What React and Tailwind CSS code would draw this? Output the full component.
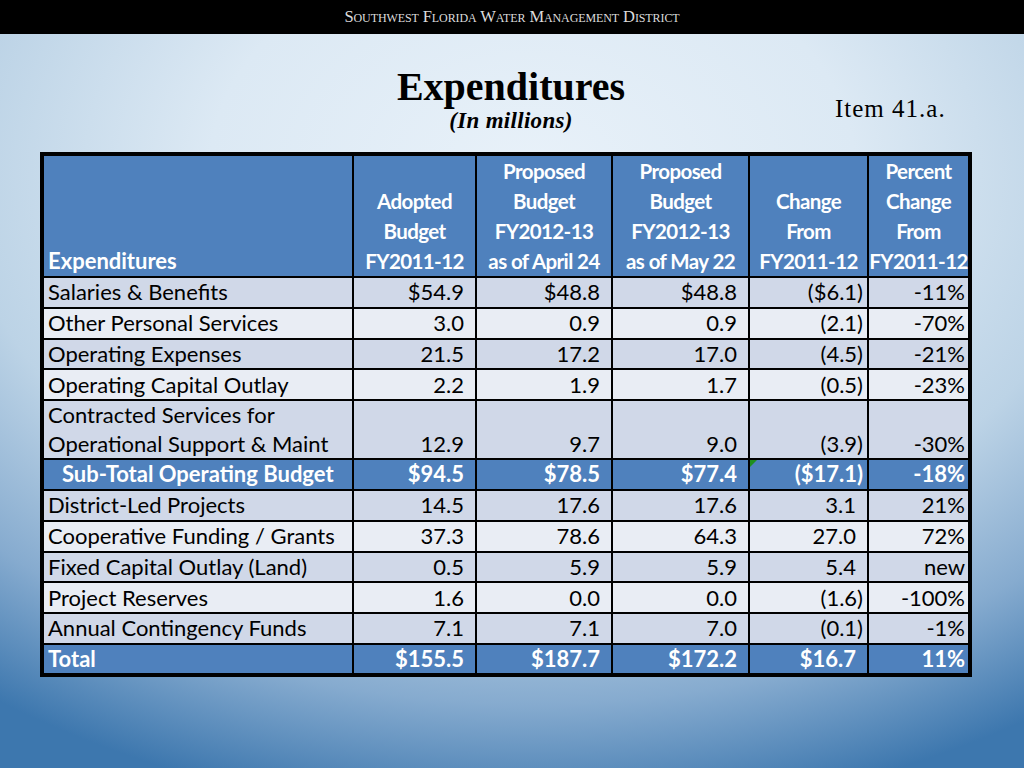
import React from "react";

const rows = [
  { label: "Salaries & Benefits", v: ["$54.9", "$48.8", "$48.8", "($6.1)", "-11%"], tone: "dark" },
  { label: "Other Personal Services", v: ["3.0", "0.9", "0.9", "(2.1)", "-70%"], tone: "light" },
  { label: "Operating Expenses", v: ["21.5", "17.2", "17.0", "(4.5)", "-21%"], tone: "dark" },
  { label: "Operating Capital Outlay", v: ["2.2", "1.9", "1.7", "(0.5)", "-23%"], tone: "light" },
  { label: ["Contracted Services for", "Operational Support & Maint"], v: ["12.9", "9.7", "9.0", "(3.9)", "-30%"], tone: "dark" },
  { label: "Sub-Total Operating Budget", v: ["$94.5", "$78.5", "$77.4", "($17.1)", "-18%"], tone: "sub" },
  { label: "District-Led Projects", v: ["14.5", "17.6", "17.6", "3.1", "21%"], tone: "dark" },
  { label: "Cooperative Funding / Grants", v: ["37.3", "78.6", "64.3", "27.0", "72%"], tone: "light" },
  { label: "Fixed Capital Outlay (Land)", v: ["0.5", "5.9", "5.9", "5.4", "new"], tone: "dark" },
  { label: "Project Reserves", v: ["1.6", "0.0", "0.0", "(1.6)", "-100%"], tone: "light" },
  { label: "Annual Contingency Funds", v: ["7.1", "7.1", "7.0", "(0.1)", "-1%"], tone: "dark" },
  { label: "Total", v: ["$155.5", "$187.7", "$172.2", "$16.7", "11%"], tone: "total" },
];

const headers = [
  ["Adopted", "Budget", "FY2011-12"],
  ["Proposed", "Budget", "FY2012-13", "as of April 24"],
  ["Proposed", "Budget", "FY2012-13", "as of May 22"],
  ["Change", "From", "FY2011-12"],
  ["Percent", "Change", "From", "FY2011-12"],
];

const toneClass = {
  dark: "bg-[#d0d8e8] text-black",
  light: "bg-[#e9edf4] text-black",
  sub: "bg-[#4f81bd] text-white font-bold",
  total: "bg-[#4f81bd] text-white font-bold",
};

// Excel "_)" format: values without a closing paren keep room for one
function padFor(val, j) {
  if (j === 4) return "pr-[3px]";
  return val.endsWith(")") ? "pr-[4px]" : "pr-[11px]";
}

export default function App() {
  return (
    <div className="w-[1024px] h-[768px] overflow-hidden flex flex-col bg-[radial-gradient(ellipse_90%_85%_at_52%_22%,#e8f1f9_0%,#dce9f4_35%,#bcd3e6_62%,#86abcf_82%,#3d77ae_100%)]">
      <div className="h-[34px] bg-black flex items-center justify-center">
        <span className="text-[16.5px] text-[#dcdcdc] [font-variant:small-caps] tracking-[-0.1px] [font-family:'Liberation_Serif',serif]">
          Southwest Florida Water Management District
        </span>
      </div>

      <div className="relative h-[118px] [font-family:'Liberation_Serif',serif] text-black">
        <div className="flex flex-col items-center pt-[32px] pr-[2px]">
          <h1 className="text-[40px] leading-[42px] font-bold">Expenditures</h1>
          <div className="text-[23px] leading-[26px] font-bold italic tracking-[0.3px]">(In millions)</div>
        </div>
        <div className="absolute left-[835px] top-[56px] text-[25px] tracking-[1px]">Item 41.a.</div>
      </div>

      <div className="pl-[40px]">
        <table className="w-[928px] table-fixed border-collapse border-[4px] border-black [font-family:Lato,'Open_Sans',sans-serif]">
          <colgroup>
            <col className="w-[311px]" />
            <col className="w-[123px]" />
            <col className="w-[136px]" />
            <col className="w-[137px]" />
            <col className="w-[119px]" />
            <col className="w-[102px]" />
          </colgroup>
          <thead>
            <tr className="bg-[#4f81bd] text-white text-[20.5px] leading-[30px]">
              <th className="border-2 border-black h-[123px] align-bottom text-left px-[4px] font-bold text-[22px]">
                Expenditures
              </th>
              {headers.map((h, i) => (
                <th key={i} className="border-2 border-black align-bottom text-center px-0 font-bold whitespace-nowrap tracking-[-0.6px]">
                  {h.map((line) => (
                    <div key={line}>{line}</div>
                  ))}
                </th>
              ))}
            </tr>
          </thead>
          <tbody className="text-[22px] leading-[28.5px]">
            {rows.map((r, i) => (
              <tr key={i} className={toneClass[r.tone]}>
                <td
                  className={`border-2 border-black align-bottom whitespace-nowrap h-[30.8px] ${
                    r.tone === "sub" ? "pl-[18px]" : "pl-[4px]"
                  }`}
                >
                  {Array.isArray(r.label) ? r.label.map((l) => <div key={l}>{l}</div>) : r.label}
                </td>
                {r.v.map((val, j) => (
                  <td key={j} className={`relative border-2 border-black text-right align-bottom whitespace-nowrap ${padFor(val, j)}`}>
                    {r.tone === "sub" && j === 3 && (
                      <span className="absolute left-0 top-0 w-0 h-0 border-t-[7px] border-t-[#1f8f1f] border-r-[7px] border-r-transparent" />
                    )}
                    {val}
                  </td>
                ))}
              </tr>
            ))}
          </tbody>
        </table>
      </div>
    </div>
  );
}
